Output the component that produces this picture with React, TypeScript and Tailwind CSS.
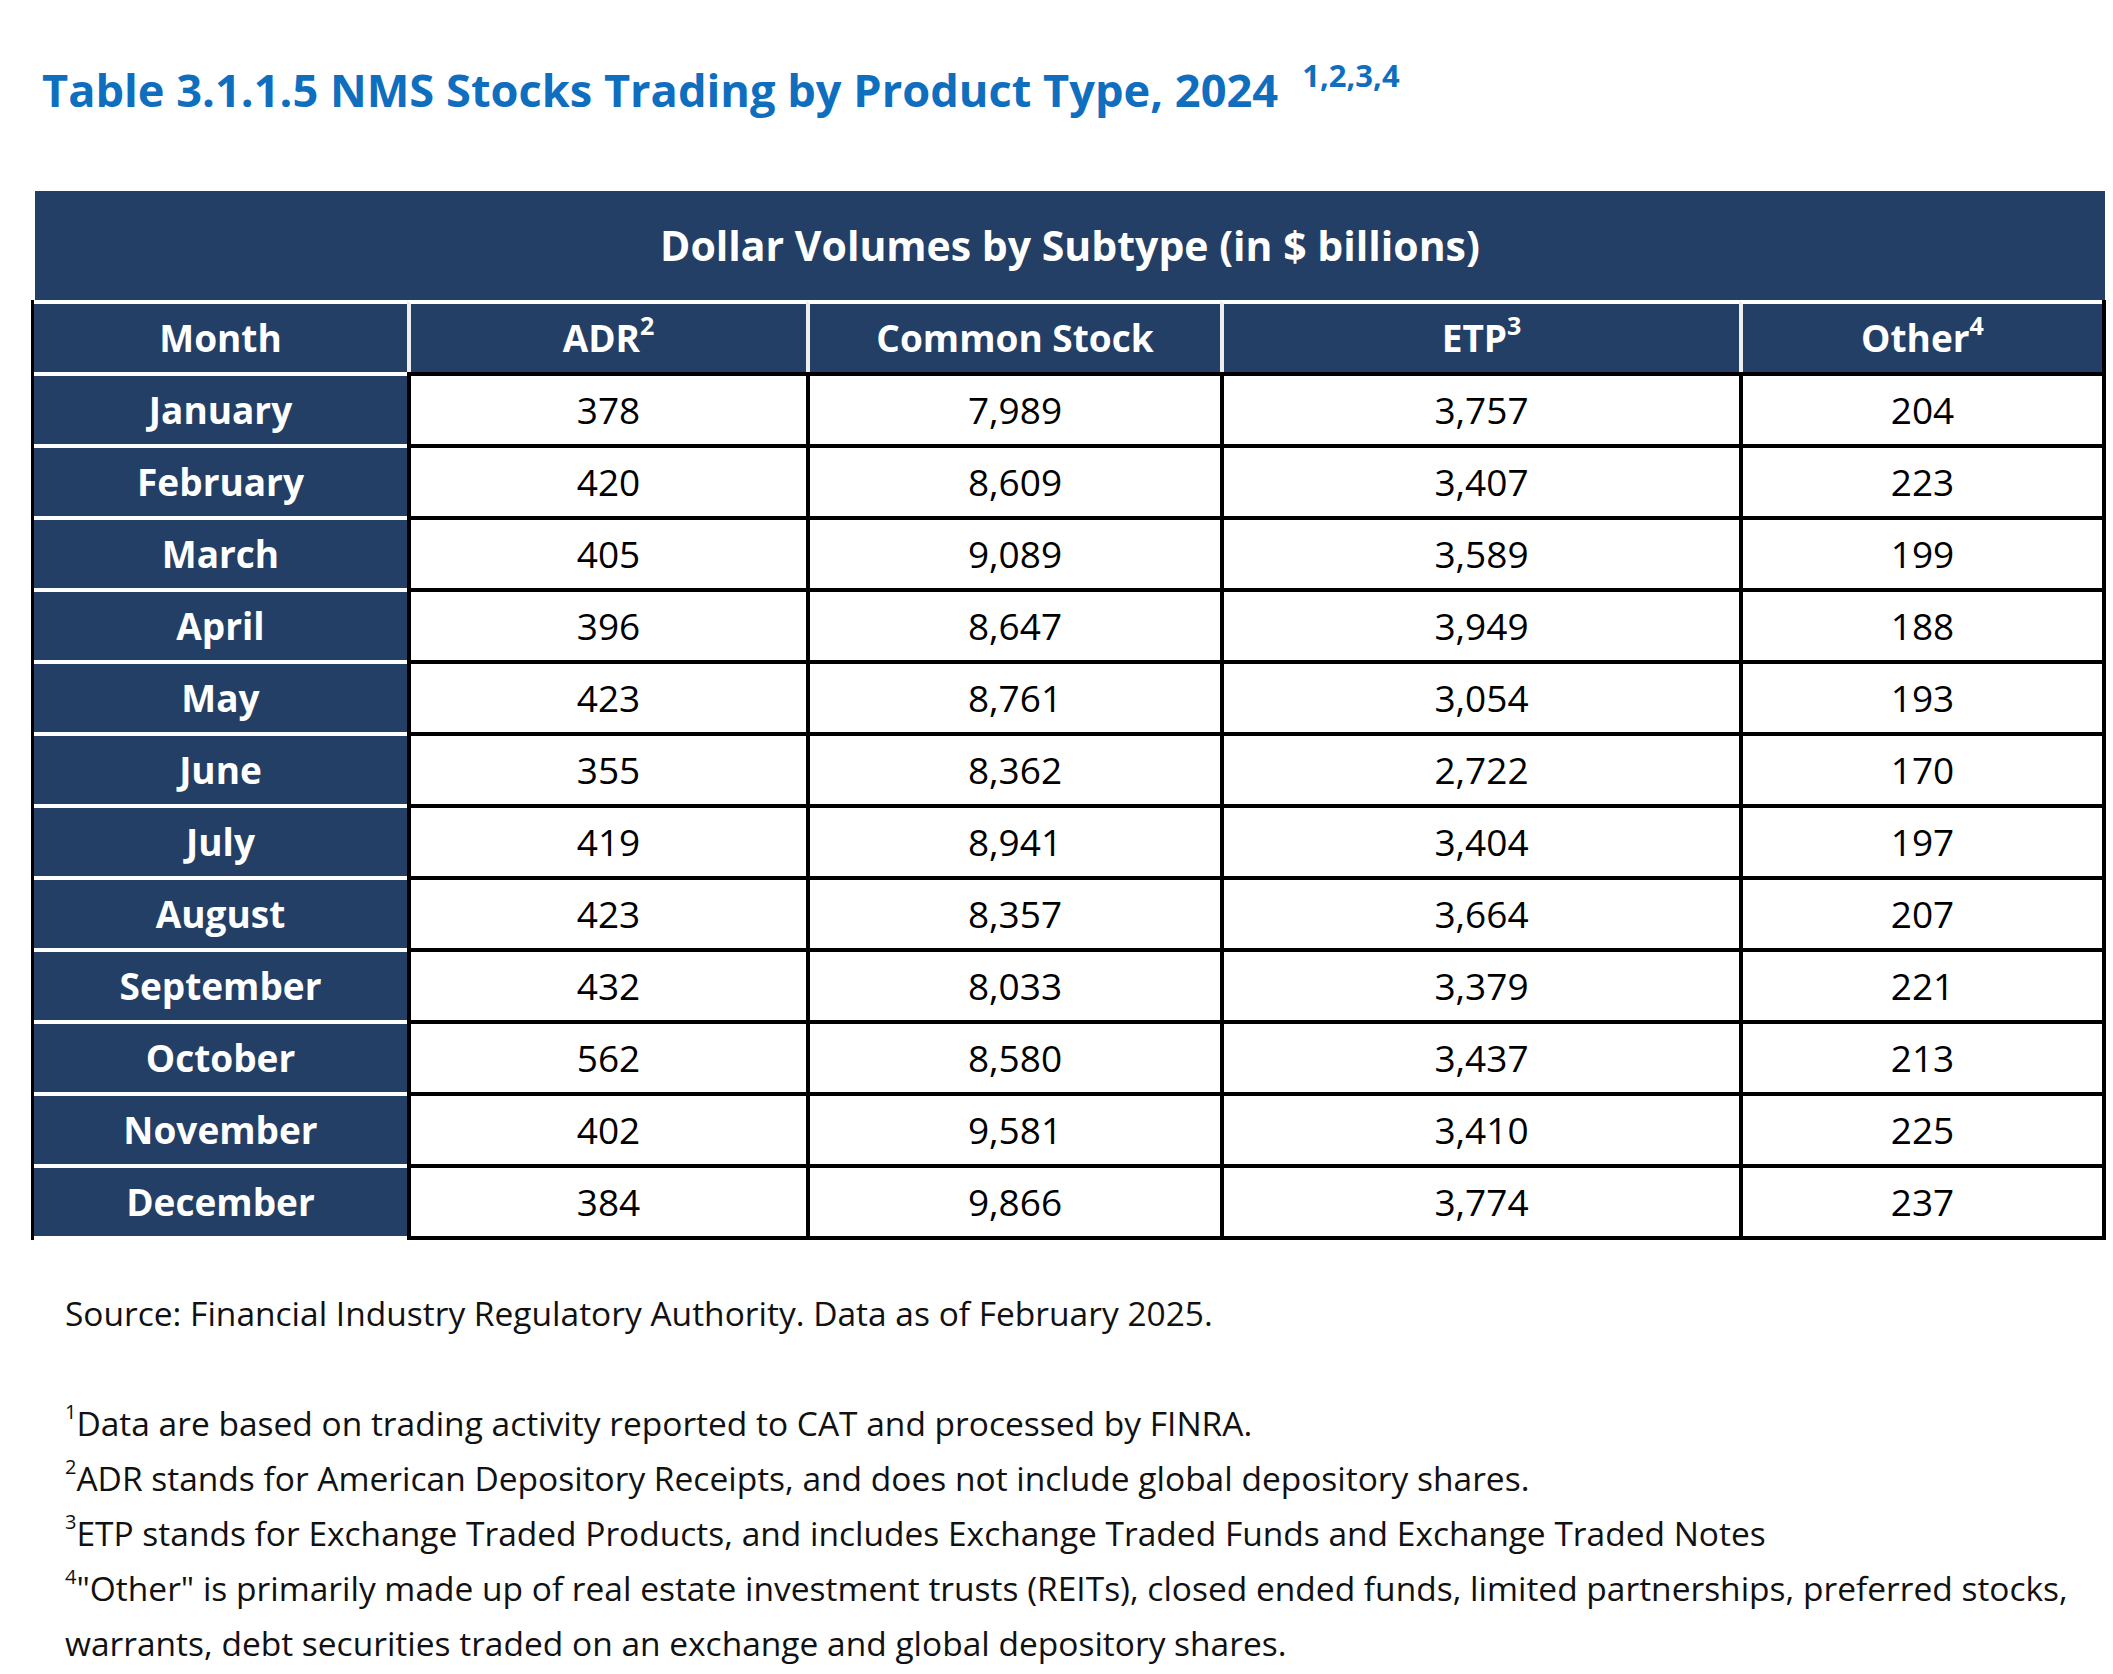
import React from "react";

interface Row {
  month: string;
  adr: string;
  common: string;
  etp: string;
  other: string;
}

const rows: Row[] = [
  { month: "January", adr: "378", common: "7,989", etp: "3,757", other: "204" },
  { month: "February", adr: "420", common: "8,609", etp: "3,407", other: "223" },
  { month: "March", adr: "405", common: "9,089", etp: "3,589", other: "199" },
  { month: "April", adr: "396", common: "8,647", etp: "3,949", other: "188" },
  { month: "May", adr: "423", common: "8,761", etp: "3,054", other: "193" },
  { month: "June", adr: "355", common: "8,362", etp: "2,722", other: "170" },
  { month: "July", adr: "419", common: "8,941", etp: "3,404", other: "197" },
  { month: "August", adr: "423", common: "8,357", etp: "3,664", other: "207" },
  { month: "September", adr: "432", common: "8,033", etp: "3,379", other: "221" },
  { month: "October", adr: "562", common: "8,580", etp: "3,437", other: "213" },
  { month: "November", adr: "402", common: "9,581", etp: "3,410", other: "225" },
  { month: "December", adr: "384", common: "9,866", etp: "3,774", other: "237" },
];

// widths include the 4px left rule of each cell
const widths = ["w-[399px]", "w-[414px]", "w-[519px]", "w-[363px]"];

function Sup({ n }: { n: string }) {
  return <sup className="text-[25px] top-[-17px]">{n}</sup>;
}

function HeadCell({ w, children }: { w: string; children: React.ReactNode }) {
  return (
    <div
      className={`${w} h-full border-l-4 border-t-4 border-l-[#eeeeee] border-t-white bg-[#243f66] flex items-center justify-center text-white text-[37px] font-bold`}
    >
      <span>{children}</span>
    </div>
  );
}

function DataCell({ w, value }: { w: string; value: string }) {
  return (
    <div className={`${w} h-full border-l-4 border-t-4 border-black bg-white flex items-center justify-center text-black text-[37px]`}>
      {value}
    </div>
  );
}

function FootSup({ n }: { n: string }) {
  return <sup className="text-[20px] top-[-17px]">{n}</sup>;
}

export default function App() {
  return (
    <div className="w-[2113px] h-[1674px] bg-white font-['Open_Sans',sans-serif] overflow-hidden">
      <h1 className="pl-[42px] pt-[67px] text-[45.2px] leading-[46px] font-bold text-[#0f6ebe]">
        Table 3.1.1.5 NMS Stocks Trading by Product Type, 2024
        <sup className="ml-[24px] text-[31px] top-[-20px]">1,2,3,4</sup>
      </h1>

      <div className="ml-[35px] mt-[78px] w-[2070px] h-[109px] bg-[#243f66] flex items-center justify-center text-white text-[41px] font-bold">
        Dollar Volumes by Subtype (in $ billions)
      </div>

      <div className="ml-[31px] w-[2075px] border-l-[3px] border-r-4 border-black">
        <div className="flex h-[72px]">
          <div className="w-[373px] h-full border-t-4 border-white bg-[#243f66] flex items-center justify-center text-white text-[37px] font-bold">
            Month
          </div>
          <HeadCell w={widths[0]}>
            ADR<Sup n="2" />
          </HeadCell>
          <HeadCell w={widths[1]}>Common Stock</HeadCell>
          <HeadCell w={widths[2]}>
            ETP<Sup n="3" />
          </HeadCell>
          <HeadCell w={widths[3]}>
            Other<Sup n="4" />
          </HeadCell>
        </div>

        {rows.map((r) => (
          <div key={r.month} className="flex h-[72px]">
            <div className="w-[373px] h-full border-t-4 border-white bg-[#243f66] flex items-center justify-center text-white text-[37px] font-bold">
              {r.month}
            </div>
            <DataCell w={widths[0]} value={r.adr} />
            <DataCell w={widths[1]} value={r.common} />
            <DataCell w={widths[2]} value={r.etp} />
            <DataCell w={widths[3]} value={r.other} />
          </div>
        ))}

        <div className="flex h-[4px]">
          <div className="w-[373px] bg-white" />
          <div className="flex-1 bg-black" />
        </div>
      </div>

      <div className="pl-[65px] mt-[46px] text-[33.5px] leading-[55px] text-[#111111] whitespace-nowrap">
        <p>Source: Financial Industry Regulatory Authority. Data as of February 2025.</p>
        <p className="mt-[55px]">
          <FootSup n="1" />
          Data are based on trading activity reported to CAT and processed by FINRA.
        </p>
        <p>
          <FootSup n="2" />
          ADR stands for American Depository Receipts, and does not include global depository shares.
        </p>
        <p>
          <FootSup n="3" />
          ETP stands for Exchange Traded Products, and includes Exchange Traded Funds and Exchange Traded Notes
        </p>
        <p>
          <FootSup n="4" />
          "Other" is primarily made up of real estate investment trusts (REITs), closed ended funds, limited partnerships, preferred stocks,
          <br />
          warrants, debt securities traded on an exchange and global depository shares.
        </p>
      </div>
    </div>
  );
}
